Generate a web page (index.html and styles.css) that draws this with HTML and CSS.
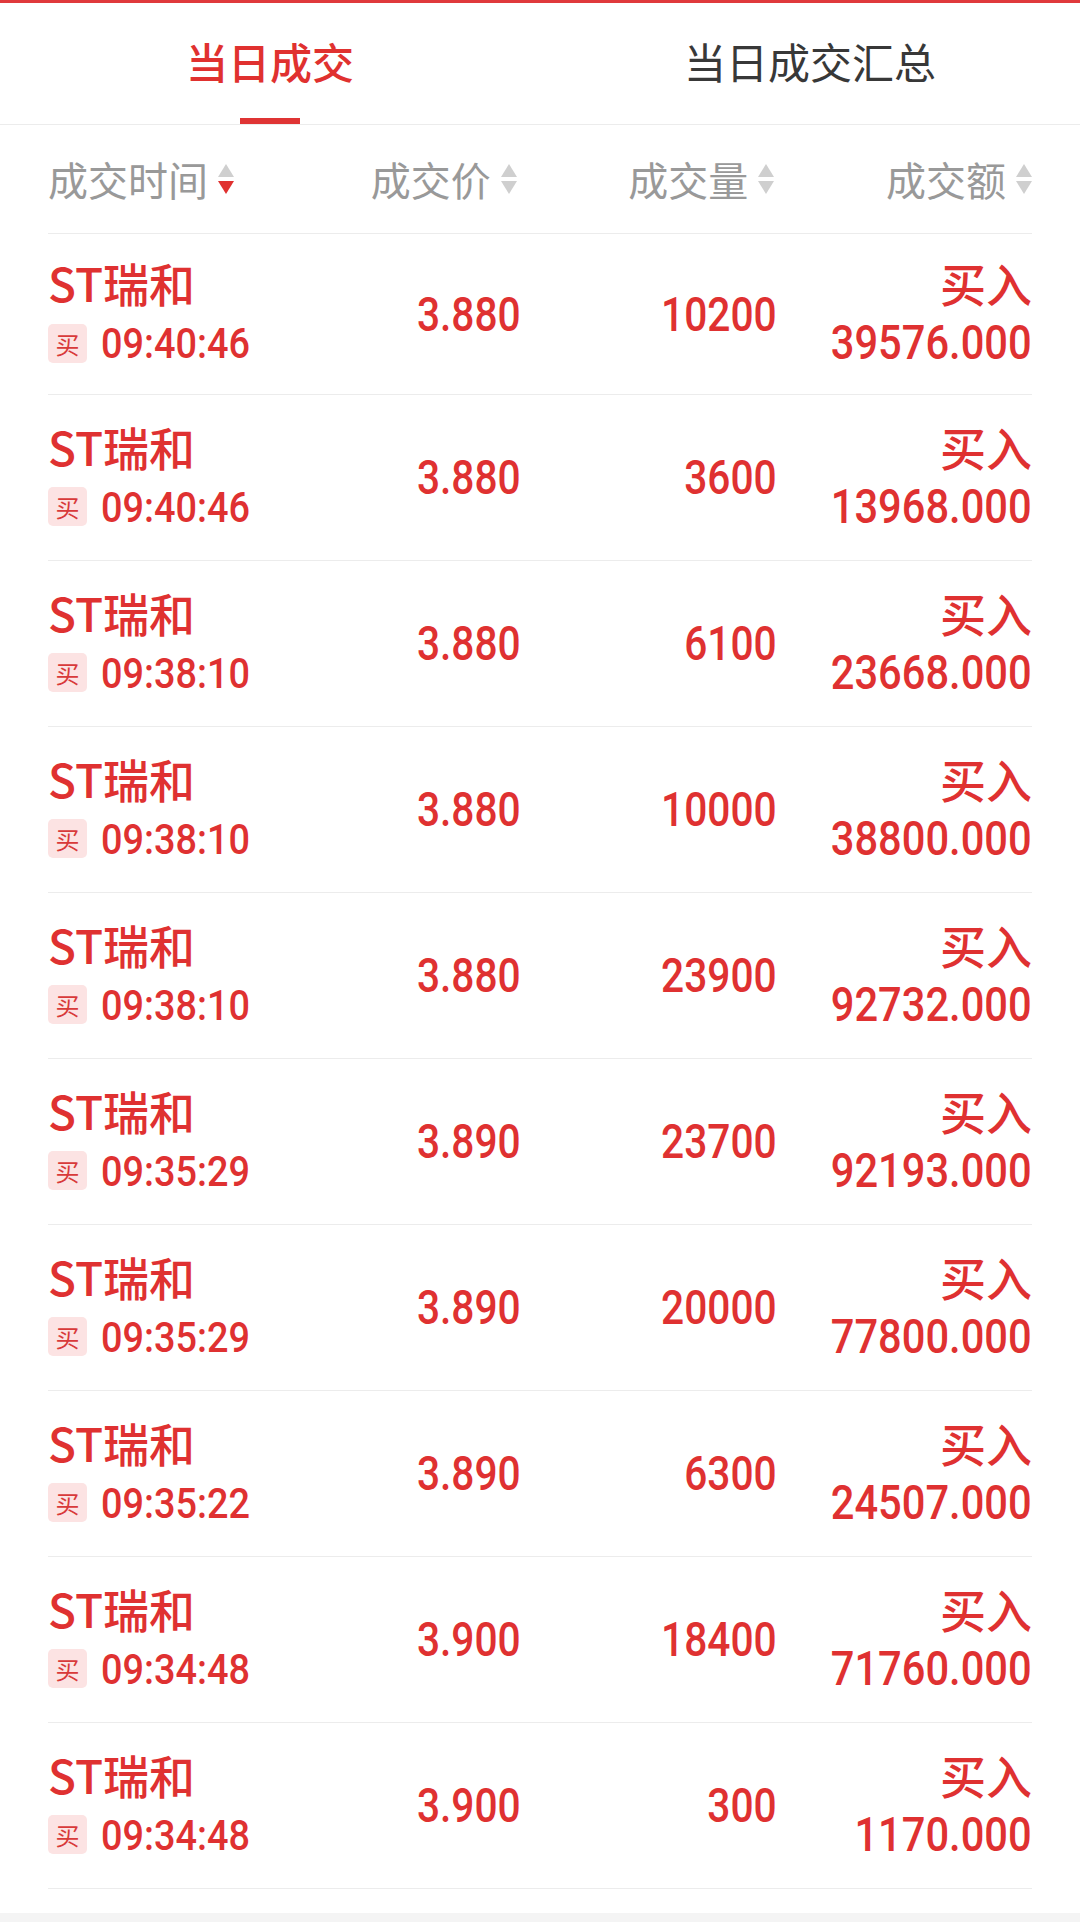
FILE: index.html
```html
<!DOCTYPE html>
<html lang="zh-CN">
  <head>
    <meta charset="UTF-8" />
    <meta name="viewport" content="width=device-width, initial-scale=1.0" />
    <title>当日成交</title>
    <link rel="stylesheet" href="styles.css">
  </head>
  <body>
    <div class="page">
      <div class="top-line"></div>

      <div class="tabs">
        <div class="tab active">
          <span class="tab-label">当日成交</span>
          <span class="tab-indicator"></span>
        </div>
        <div class="tab">
          <span class="tab-label">当日成交汇总</span>
          <span class="tab-indicator"></span>
        </div>
      </div>

      <div class="list">
        <div class="list-head">
          <div class="head-cell left">成交时间<span class="sort desc"><i class="up"></i><i class="down"></i></span></div>
          <div class="head-cell">成交价<span class="sort"><i class="up"></i><i class="down"></i></span></div>
          <div class="head-cell">成交量<span class="sort"><i class="up"></i><i class="down"></i></span></div>
          <div class="head-cell">成交额<span class="sort"><i class="up"></i><i class="down"></i></span></div>
        </div>

        <div class="trade-row">
          <div class="cell-name">
            <div class="name">ST瑞和</div>
            <div class="sub"><span class="badge">买</span><span class="time">09:40:46</span></div>
          </div>
          <div class="num">3.880</div>
          <div class="num">10200</div>
          <div class="cell-amount">
            <div class="side">买入</div>
            <div class="amount">39576.000</div>
          </div>
        </div>

        <div class="trade-row">
          <div class="cell-name">
            <div class="name">ST瑞和</div>
            <div class="sub"><span class="badge">买</span><span class="time">09:40:46</span></div>
          </div>
          <div class="num">3.880</div>
          <div class="num">3600</div>
          <div class="cell-amount">
            <div class="side">买入</div>
            <div class="amount">13968.000</div>
          </div>
        </div>

        <div class="trade-row">
          <div class="cell-name">
            <div class="name">ST瑞和</div>
            <div class="sub"><span class="badge">买</span><span class="time">09:38:10</span></div>
          </div>
          <div class="num">3.880</div>
          <div class="num">6100</div>
          <div class="cell-amount">
            <div class="side">买入</div>
            <div class="amount">23668.000</div>
          </div>
        </div>

        <div class="trade-row">
          <div class="cell-name">
            <div class="name">ST瑞和</div>
            <div class="sub"><span class="badge">买</span><span class="time">09:38:10</span></div>
          </div>
          <div class="num">3.880</div>
          <div class="num">10000</div>
          <div class="cell-amount">
            <div class="side">买入</div>
            <div class="amount">38800.000</div>
          </div>
        </div>

        <div class="trade-row">
          <div class="cell-name">
            <div class="name">ST瑞和</div>
            <div class="sub"><span class="badge">买</span><span class="time">09:38:10</span></div>
          </div>
          <div class="num">3.880</div>
          <div class="num">23900</div>
          <div class="cell-amount">
            <div class="side">买入</div>
            <div class="amount">92732.000</div>
          </div>
        </div>

        <div class="trade-row">
          <div class="cell-name">
            <div class="name">ST瑞和</div>
            <div class="sub"><span class="badge">买</span><span class="time">09:35:29</span></div>
          </div>
          <div class="num">3.890</div>
          <div class="num">23700</div>
          <div class="cell-amount">
            <div class="side">买入</div>
            <div class="amount">92193.000</div>
          </div>
        </div>

        <div class="trade-row">
          <div class="cell-name">
            <div class="name">ST瑞和</div>
            <div class="sub"><span class="badge">买</span><span class="time">09:35:29</span></div>
          </div>
          <div class="num">3.890</div>
          <div class="num">20000</div>
          <div class="cell-amount">
            <div class="side">买入</div>
            <div class="amount">77800.000</div>
          </div>
        </div>

        <div class="trade-row">
          <div class="cell-name">
            <div class="name">ST瑞和</div>
            <div class="sub"><span class="badge">买</span><span class="time">09:35:22</span></div>
          </div>
          <div class="num">3.890</div>
          <div class="num">6300</div>
          <div class="cell-amount">
            <div class="side">买入</div>
            <div class="amount">24507.000</div>
          </div>
        </div>

        <div class="trade-row">
          <div class="cell-name">
            <div class="name">ST瑞和</div>
            <div class="sub"><span class="badge">买</span><span class="time">09:34:48</span></div>
          </div>
          <div class="num">3.900</div>
          <div class="num">18400</div>
          <div class="cell-amount">
            <div class="side">买入</div>
            <div class="amount">71760.000</div>
          </div>
        </div>

        <div class="trade-row">
          <div class="cell-name">
            <div class="name">ST瑞和</div>
            <div class="sub"><span class="badge">买</span><span class="time">09:34:48</span></div>
          </div>
          <div class="num">3.900</div>
          <div class="num">300</div>
          <div class="cell-amount">
            <div class="side">买入</div>
            <div class="amount">1170.000</div>
          </div>
        </div>
      </div>
    </div>
  </body>
</html>
```

FILE: styles.css
```css
body {
  font-family: "Noto Sans CJK SC", "Noto Sans", sans-serif;
  margin: 0;
  padding: 0;
  background-color: #f4f4f4;
}

.page {
  background-color: #fff;
  padding-bottom: 24px;
}

.top-line {
  height: 3px;
  background-color: #e0393c;
}

/* tabs */
.tabs {
  display: flex;
  border-bottom: 1px solid #ececec;
}

.tab {
  flex: 1;
  display: flex;
  flex-direction: column;
  align-items: center;
  height: 121px;
}

.tab-label {
  line-height: 115px;
  font-size: 42px;
  color: #383838;
}

.tab-indicator {
  width: 60px;
  height: 6px;
}

.tab.active .tab-label {
  color: #e0312f;
  font-weight: 500;
}

.tab.active .tab-indicator {
  background-color: #df3434;
}

/* list */
.list {
  padding: 0 48px;
}

.list-head,
.trade-row {
  display: grid;
  grid-template-columns: 217px 1fr 1fr 1fr;
  align-items: center;
  border-bottom: 1px solid #ececec;
}

.list-head {
  height: 108px;
}

.head-cell {
  display: flex;
  align-items: center;
  justify-content: flex-end;
  font-size: 40px;
  line-height: 108px;
  color: #999;
}

.head-cell.left {
  justify-content: flex-start;
}

.head-cell:nth-child(2) {
  padding-right: 4px;
}

.head-cell:nth-child(3) {
  padding-right: 2px;
}

.sort {
  display: inline-flex;
  flex-direction: column;
  gap: 4px;
  margin-left: 10px;
}

.sort i {
  display: block;
  width: 0;
  height: 0;
  border-left: 8px solid transparent;
  border-right: 8px solid transparent;
}

.sort .up {
  border-bottom: 13px solid #cfcfcf;
}

.sort .down {
  border-top: 13px solid #cfcfcf;
}

.sort.desc .down {
  border-top-color: #e0312f;
}

.trade-row {
  height: 165px;
  color: #df3131;
}

.list-head + .trade-row {
  height: 160px;
}

.name,
.side {
  font-size: 46px;
  font-weight: 500;
  line-height: 58px;
}

.sub {
  display: flex;
  align-items: center;
  gap: 14px;
  height: 64px;
}

.badge {
  flex-shrink: 0;
  width: 39px;
  height: 39px;
  border-radius: 5px;
  background-color: #fce3e3;
  color: #d83a3a;
  font-size: 24px;
  line-height: 39px;
  text-align: center;
}

/* narrow digits, squeezed to the width of the app's number face */
.time,
.num,
.amount {
  font-family: Roboto, "DejaVu Sans Condensed", sans-serif;
  font-weight: 500;
}

.time {
  display: inline-block;
  font-size: 43px;
  transform: scaleX(0.88);
  transform-origin: left center;
}

.num {
  text-align: right;
  font-size: 49px;
  transform: scaleX(0.83);
  transform-origin: right center;
}

.cell-amount {
  text-align: right;
}

.amount {
  font-size: 49px;
  line-height: 64px;
  transform: scaleX(0.85);
  transform-origin: right center;
}
```
